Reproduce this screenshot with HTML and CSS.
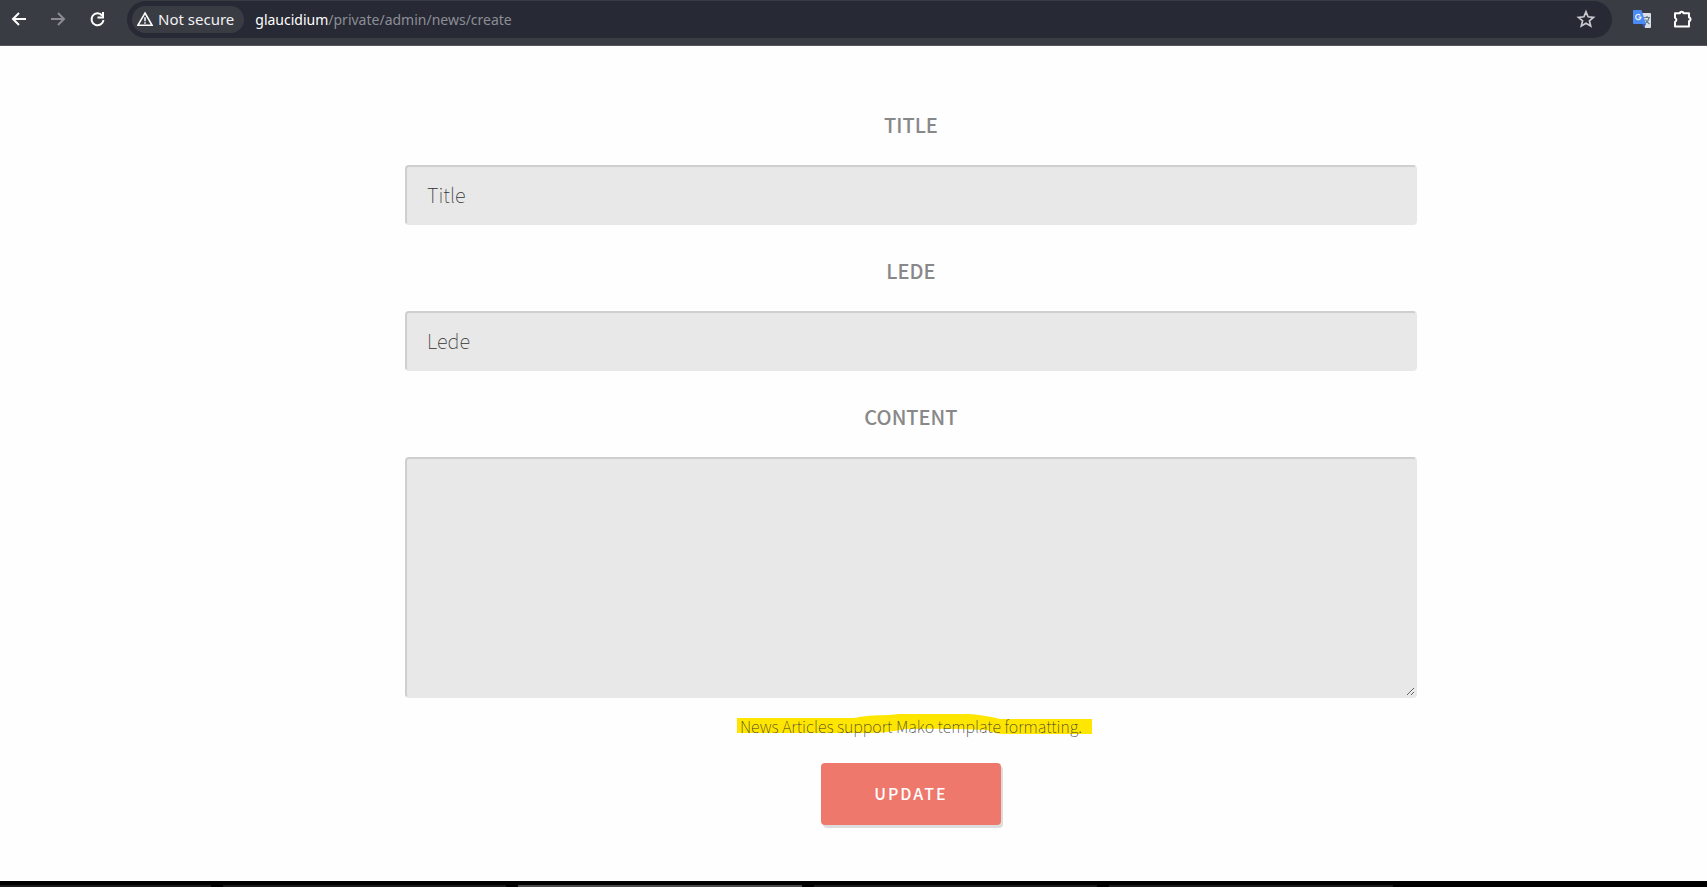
FILE: index.html
```html
<!DOCTYPE html>
<html lang="en">
<head>
<meta charset="utf-8">
<title>Create news</title>
<link rel="stylesheet" href="styles.css">
</head>
<body>
<header class="toolbar">
  <nav class="nav-buttons">
    <button class="icon-button" type="button" aria-label="Back"><svg width="20" height="20" viewBox="0 0 20 20"><path d="M17 10H4M10 4l-6 6 6 6" fill="none" stroke="#fff" stroke-width="2"/></svg></button>
    <button class="icon-button" type="button" aria-label="Forward"><svg width="20" height="20" viewBox="0 0 20 20"><path d="M3 10h13M10 4l6 6-6 6" fill="none" stroke="#8a8c91" stroke-width="2"/></svg></button>
    <button class="icon-button" type="button" aria-label="Reload"><svg width="20" height="20" viewBox="0 0 20 20"><path d="M15.2 6.500A6 6 0 1 0 16.500 11" fill="none" stroke="#fff" stroke-width="2"/><path d="M16 3v5.500h-5.500" fill="none" stroke="#fff" stroke-width="2"/></svg></button>
  </nav>
  <div class="address">
    <button class="security" type="button"><svg width="16" height="16" viewBox="0 0 16 16"><path d="M8 2L15 14.200H1z" fill="none" stroke="#fff" stroke-width="1.600"/><path d="M8 6.200v4M8 11.200v1.500" stroke="#fff" stroke-width="1.500"/></svg>Not secure</button>
    <a class="url" href="#"><span class="host">glaucidium</span>/private/admin/news/create</a>
    <button class="icon-button" type="button" aria-label="Bookmark"><svg width="20" height="20" viewBox="0 0 20 20"><path d="M10 2.800l2.100 5 5.400.5-4.100 3.500 1.300 5.300L10 14.300l-4.700 2.800 1.300-5.300L2.500 8.300l5.400-.5z" fill="none" stroke="#c9cace" stroke-width="1.700"/></svg></button>
  </div>
  <button class="icon-button" type="button" aria-label="Translate"><svg width="20" height="20" viewBox="0 0 20 20"><path d="M8 4h10a1 1 0 0 1 1 1v13a1 1 0 0 1-1 1h-5z" fill="#dcdfe3"/><path d="M12 8.500h6M15 7v1.500M17 8.500c-.5 3-2 5-4 6M13.500 10.500c1 2 2.500 3.500 4 4.500" fill="none" stroke="#607988" stroke-width="1.200"/><path d="M10 15h4l-2 4z" fill="#3457b5"/><path d="M2 1h7.500L14 15H2a1 1 0 0 1-1-1V2a1 1 0 0 1 1-1z" fill="#4b8bf5"/><path d="M8.300 6.300A2.600 2.600 0 1 0 8.900 8.200H6.500" fill="none" stroke="#e8f0ff" stroke-width="1.300"/></svg></button>
  <button class="icon-button" type="button" aria-label="Extensions"><svg width="20" height="20" viewBox="0 0 20 20"><path d="M3 4.200H8V3.500Q9.700 1.800 11.400 3.500V4.200H17V8.500H17.700Q19.300 10.200 17.700 12H17V17.500H3V13Q5.800 10.800 3 8.700z" fill="none" stroke="#fff" stroke-width="2" stroke-linejoin="round"/></svg></button>
</header>
<main class="page">
  <form class="news-form">
    <label class="label" for="title">TITLE</label>
    <input class="field" id="title" type="text" placeholder="Title">
    <label class="label" for="lede">LEDE</label>
    <input class="field" id="lede" type="text" placeholder="Lede">
    <label class="label" for="content">CONTENT</label>
    <textarea class="field content" id="content"></textarea>
    <p class="hint"><svg class="marker" width="355" height="21" viewBox="0 0 355 21"><path d="M0 4H117Q130 1 152 1L162 0H233Q252 2 263 5H355V20H267Q258 20 250 16Q205 14 168 15Q150 19 132 19H0z" fill="#ffe600"/></svg><span class="hint-text">News Articles support Mako template formatting.</span></p>
    <button class="submit" type="submit">UPDATE</button>
  </form>
</main>
<footer class="taskbar"><i class="task"></i><i class="task"></i><i class="task active"></i><i class="task"></i><i class="task"></i></footer>
</body>
</html>
```
FILE: styles.css
```css
* { box-sizing: border-box; }
body {
  margin: 0;
  min-height: 100vh;
  display: flex;
  flex-direction: column;
  overflow: hidden;
  background: #fefefe;
  font-family: "Noto Sans CJK JP", "Noto Sans", sans-serif;
}
button { border: 0; font: inherit; cursor: pointer; }
.toolbar {
  display: flex;
  align-items: center;
  gap: 20px;
  height: 46px;
  padding: 0 15px 7px 9px;
  background: #3a3c44;
  border-bottom: 1px solid #55575c;
  font-family: "Noto Sans", sans-serif;
  font-size: 15px;
}
.nav-buttons { display: flex; gap: 19px; }
.icon-button { width: 20px; height: 20px; padding: 0; background: none; }
.icon-button svg { display: block; }
.address {
  flex: 1;
  display: flex;
  align-items: center;
  height: 37px;
  padding: 0 16px 0 5px;
  border-radius: 19px;
  background: #272934;
}
.security {
  display: flex;
  align-items: center;
  gap: 5px;
  height: 27px;
  padding: 0 10px 0 5px;
  border-radius: 14px;
  background: #3a3c44;
  color: #f1f1f3;
}
.url { flex: 1; margin-left: 11px; color: #8c8e95; font-size: 14px; text-decoration: none; }
.host { color: #fff; }
.page { flex: 1; padding: 62px 17% 0 405px; }
.news-form { display: flex; flex-direction: column; align-items: center; }
.label {
  height: 57px;
  color: #888;
  font-size: 20px;
  font-weight: 500;
  line-height: 34px;
}
.field {
  width: 100%;
  height: 60px;
  margin-bottom: 29px;
  padding: 0 20px 2px;
  border: 2px solid #e8e8e8;
  border-top-color: #cfcfcf;
  border-left-color: #cfcfcf;
  border-radius: 4px;
  background: #e8e8e8;
  font: 100 20px "Noto Sans CJK JP", sans-serif;
  color: #333;
}
.field::placeholder { color: #333; }
.content { height: 241px; margin-bottom: 14px; resize: vertical; }
.hint { position: relative; margin: 0 0 23px; font-size: 16px; font-weight: 100; line-height: 28px; }
.marker { position: absolute; left: -3px; top: 2px; }
.hint-text { position: relative; color: #333; }
.submit {
  width: 180px;
  height: 62px;
  padding-bottom: 4px;
  border-radius: 4px;
  background: #ee786b;
  box-shadow: 2px 3px 0 #ddd;
  color: #fff;
  font-size: 16px;
  font-weight: 500;
  letter-spacing: 2px;
}
.taskbar {
  display: grid;
  grid-template-columns: 211px 283px 284px 283px 284px;
  gap: 12px;
  height: 6px;
  padding-top: 4px;
  background: #000;
}
.task { background: #1c1c1e; }
.active { background: #4a4a4a; }
```
